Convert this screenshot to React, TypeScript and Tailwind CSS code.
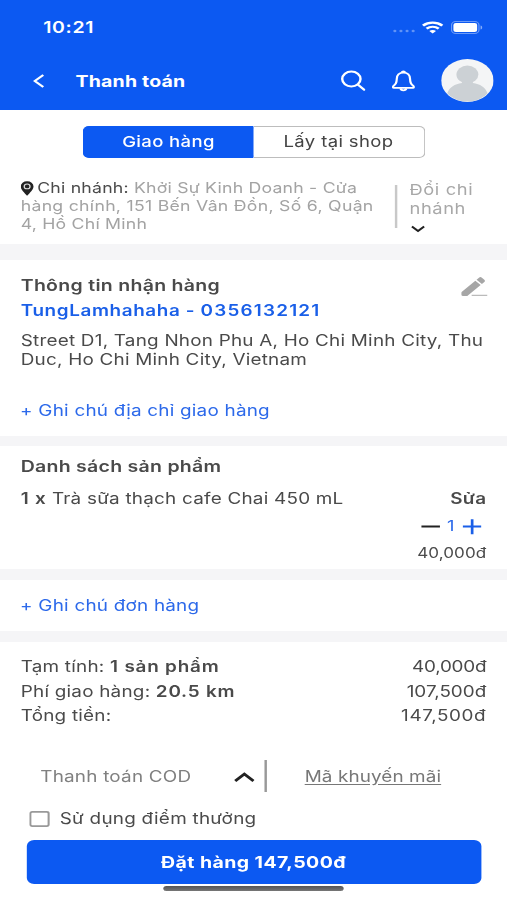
import React, { useState } from 'react'

interface SummaryRow {
  label: string
  detail?: string
  value: string
  valueClass: string
}

const summary: SummaryRow[] = [
  { label: 'Tạm tính:', detail: '1 sản phẩm', value: '40,000đ', valueClass: 'tracking-[-0.2px]' },
  { label: 'Phí giao hàng:', detail: '20.5 km', value: '107,500đ', valueClass: 'tracking-[0px]' },
  { label: 'Tổng tiền:', value: '147,500đ', valueClass: 'tracking-[0.5px]' },
]

function StatusBar() {
  return (
    <div className="flex h-[54px] items-center pl-[35.5px] pr-[20px] text-white">
      <span className="text-[16px] font-semibold tracking-[0.5px]">10:21</span>
      <div className="ml-auto flex items-center">
        <svg className="mr-[5px] mt-[8px] h-[4px] w-[19px]" viewBox="0 0 19 4" fill="#fff" opacity="0.35">
          <circle cx="2" cy="2" r="1.3" />
          <circle cx="7" cy="2" r="1.3" />
          <circle cx="12" cy="2" r="1.3" />
          <circle cx="17" cy="2" r="1.3" />
        </svg>
        <svg className="mr-[6px] h-[13px] w-[18px]" viewBox="0 0 17 13" preserveAspectRatio="none" fill="none" stroke="#fff">
          <path d="M1 4.6C5.3.6 11.7.6 16 4.6" strokeWidth="2.3" />
          <path d="M3.8 7.6c2.7-2.5 6.7-2.5 9.4 0" strokeWidth="2.2" />
          <path d="M8.5 12.6 5.9 10c1.5-1.4 3.7-1.4 5.2 0z" fill="#fff" stroke="none" />
        </svg>
        <svg className="h-[13px] w-[26px]" viewBox="0 0 26 13">
          <rect x="0.5" y="0.5" width="22.5" height="12" rx="3.5" fill="none" stroke="#fff" strokeOpacity="0.4" />
          <rect x="2" y="2" width="19.5" height="9" rx="2" fill="#fff" />
          <path d="M24.3 4.5v4c.9-.3 1.4-1.1 1.4-2s-.5-1.7-1.4-2z" fill="#fff" fillOpacity="0.5" />
        </svg>
      </div>
    </div>
  )
}

function Header() {
  return (
    <header className="h-[110px] bg-[#0c59f2]">
      <StatusBar />
      <div className="flex h-[53px] items-center pl-[27px] pr-[11.5px] text-white">
        <svg className="h-[14px] w-[10px]" viewBox="0 0 10 14" fill="none" stroke="#fff" strokeWidth="2">
          <path d="M8.5 1 1.5 7l7 6" />
        </svg>
        <h1 className="ml-[25px] text-[16px] font-bold tracking-[0.15px]">Thanh toán</h1>
        <svg className="ml-auto h-[22px] w-[21px]" viewBox="0 0 21 22" fill="none" stroke="#fff" strokeWidth="2" strokeLinecap="round">
          <circle cx="9.3" cy="9" r="7.5" />
          <path d="m14.8 14.7 5 5" />
        </svg>
        <svg className="ml-[21px] h-[22px] w-[20px]" viewBox="0 0 20 22" fill="none" stroke="#fff" strokeWidth="1.8" strokeLinejoin="round">
          <path d="M10 2.6C6.4 2.6 4.7 5.4 4.6 8.5c-.2 5-1.1 5.800-2.800 7.500-.6.8-.4 1.900.4 1.900h15.600c.8 0 1-1.100.4-1.900-1.700-1.700-2.600-2.500-2.800-7.500C15.300 5.400 13.600 2.600 10 2.600z" />
          <path d="M8.7 2.3c.2-1.300 2.400-1.300 2.600 0" />
          <path d="M7.6 18.400c.4 2.500 4.400 2.500 4.800 0" />
        </svg>
        <svg className="ml-[21px] h-[43px] w-[43px]" viewBox="0 0 43 43">
          <defs>
            <clipPath id="avatar">
              <circle cx="21.5" cy="21.5" r="21" />
            </clipPath>
          </defs>
          <circle cx="21.5" cy="21.5" r="21.5" fill="#f4f5f6" />
          <g fill="#ccd1d5" clipPath="url(#avatar)">
            <circle cx="21.5" cy="15.5" r="9" />
            <path d="M17 21h9v3c6 1 10 4 12 10v10H5V34c2-6 6-9 12-10z" />
          </g>
        </svg>
      </div>
    </header>
  )
}

function DeliveryTabs({ active, onChange }: { active: string; onChange: (tab: string) => void }) {
  return (
    <div className="mx-auto flex h-[32px] w-[281px] text-[15.2px] tracking-[0.3px]">
      {['Giao hàng', 'Lấy tại shop'].map((tab) => (
        <button
          key={tab}
          onClick={() => onChange(tab)}
          className={`w-1/2 border pt-[1px] first:rounded-l-[5px] first:border-r-0 last:rounded-r-[5px] last:border-l-0 ${
            active === tab ? 'border-[#0c59f2] bg-[#0c59f2] font-medium text-white' : 'border-[#bdbdbd] text-[#444]'
          }`}
        >
          {tab}
        </button>
      ))}
    </div>
  )
}

function Divider({ className }: { className: string }) {
  return <div className={`bg-[#f5f5f7] ${className}`} />
}

export default function App() {
  const [tab, setTab] = useState('Giao hàng')
  const [quantity, setQuantity] = useState(1)
  const [usePoints, setUsePoints] = useState(false)

  return (
    <div className="h-[900px] w-[507px] overflow-hidden bg-white">
      <div className="h-[900px] w-[416px] origin-top-left scale-x-[1.21875] whitespace-nowrap font-['Inter','Liberation_Sans',sans-serif] text-[15px] tracking-[0.18px] text-[#4a4a4a]">
        <Header />

        <section className="h-[134px] pt-[16px]">
          <DeliveryTabs active={tab} onChange={setTab} />
          <div className="flex pl-[17px] pt-[21px]">
            <p className="w-[307px] text-[14.5px] leading-[18px] text-[#a3a3a3]">
              <svg className="mr-[3px] inline-block h-[15px] w-[10.5px] align-[-3px]" viewBox="0 0 11 15">
                <path d="M5.5 0A5.4 5.4 0 0 0 0 5.4C0 9 5.5 15 5.5 15S11 9 11 5.4A5.4 5.4 0 0 0 5.5 0z" fill="#222" />
                <circle cx="5.5" cy="5.3" r="2.5" fill="#222" stroke="#ddd" strokeWidth="1.1" />
              </svg>
              <span className="text-[#4a4a4a]">Chi nhánh:</span> Khởi Sự Kinh Doanh - Cửa
              <br />
              <span className="tracking-[0.23px]">hàng chính, 151 Bến Vân Đồn, Số 6, Quận</span>
              <br />
              4, Hồ Chí Minh
            </p>
            <div className="mt-[6px] h-[43px] w-[2px] bg-[#c8c8c8]" />
            <button className="ml-[10px] mt-[1px] flex flex-col items-start text-left text-[15px] leading-[19px] tracking-[0.5px] text-[#a8a8a8]">
              Đổi chi
              <br />
              nhánh
              <svg className="ml-[1px] mt-[7px] h-[8px] w-[12px]" viewBox="0 0 12 8" fill="none" stroke="#222" strokeWidth="1.7">
                <path d="m1 1.5 5 4.5 5-4.5" />
              </svg>
            </button>
          </div>
        </section>

        <Divider className="h-[16px]" />

        <section className="relative h-[176px] pl-[17px] pt-[13px]">
          <h2 className="text-[16px] font-semibold leading-[25px] tracking-[0.24px]">Thông tin nhận hàng</h2>
          <p className="text-[15.5px] font-semibold leading-[25px] tracking-[0.5px] text-[#1a5fe8]">
            TungLamhahaha - <span className="tracking-[0.98px]">0356132121</span>
          </p>
          <p className="mt-[8px] text-[15.5px] leading-[19px]">
            Street D1, Tang Nhon Phu A, Ho Chi Minh City, Thu
            <br />
            Duc, Ho Chi Minh City, Vietnam
          </p>
          <button className="-ml-[0.5px] mt-[30px] block text-[15.5px] leading-[24px] text-[#2c69ea]">+ Ghi chú địa chỉ giao hàng</button>
          <svg className="absolute right-[16px] top-[15px] h-[23px] w-[22px]" viewBox="0 0 22 23" fill="#a6a6a6">
            <path d="M1 16.700 12 5.700l4.400 4.400L5.400 21.100H2q-1.400 0-1.400-1.400v-2q0-.6.400-1z" />
            <path d="m13 4.700 2-2q1.200-1.200 2.400 0l2 2q1.200 1.200 0 2.400l-2 2z" />
            <path d="M9 19.800h13v1.300H9z" fill="#bbb" />
          </svg>
        </section>

        <Divider className="h-[10px]" />

        <section className="h-[123px] pl-[17px] pr-[17px] pt-[8px]">
          <h2 className="text-[16px] font-semibold leading-[25px] tracking-[0.22px]">Danh sách sản phẩm</h2>
          <div className="mt-[7px] flex justify-between text-[15.5px] leading-[25px] tracking-[0.18px]">
            <p>
              <b className="font-semibold tracking-[0.6px]">1 x</b> Trà sữa thạch cafe Chai 450 mL
            </p>
            <button className="font-semibold">Sửa</button>
          </div>
          <div className="mt-[3px] flex h-[25px] items-center justify-end pr-[4px] text-[#2c69ea]">
            <button onClick={() => setQuantity(Math.max(1, quantity - 1))}>
              <svg className="h-[16px] w-[16px]" viewBox="0 0 16 16" fill="none" stroke="#222" strokeWidth="2.2">
                <path d="M.8 7.500H16" />
              </svg>
            </button>
            <span className="w-[18px] text-center text-[15px]">{quantity}</span>
            <button onClick={() => setQuantity(quantity + 1)}>
              <svg className="h-[16px] w-[16px]" viewBox="0 0 16 16" fill="none" stroke="#1a5fe8" strokeWidth="2.2">
                <path d="M.8 7.500H16M8.400.2v15" />
              </svg>
            </button>
          </div>
          <p className="mt-[2px] text-right text-[14px] leading-[24px] tracking-[0.05px]">40,000đ</p>
        </section>

        <Divider className="h-[11px]" />

        <section className="flex h-[51px] items-center pl-[16.5px]">
          <button className="text-[15.5px] text-[#2c69ea]">+ Ghi chú đơn hàng</button>
        </section>

        <Divider className="h-[11px]" />

        <section className="h-[110px] px-[17px] pt-[13px]">
          {summary.map((row) => (
            <div key={row.label} className="flex justify-between text-[15.5px] leading-[24.7px]">
              <p>
                {row.label} {row.detail && <b className="font-semibold tracking-[0.65px]">{row.detail}</b>}
              </p>
              <span className={row.valueClass}>{row.value}</span>
            </div>
          ))}
        </section>

        <footer className="text-[15.5px]">
          <div className="flex h-[48px] items-center">
            <button className="flex w-[217px] items-center justify-between pl-[33px] pr-[8.5px] pt-[1px] text-[#808080]">
              Thanh toán COD
              <svg className="h-[10px] w-[17px]" viewBox="0 0 17 10" fill="none" stroke="#222" strokeWidth="2.5">
                <path d="m1 9 7.5-7L16 9" />
              </svg>
            </button>
            <div className="h-[32px] w-[1.5px] bg-[#999]" />
            <button className="ml-[31.5px] pt-[1px] tracking-[0.08px] text-[#777] underline underline-offset-2">Mã khuyến mãi</button>
          </div>
          <label className="flex h-[36px] items-center pl-[24px] pt-[1px] tracking-[0.2px]">
            <input type="checkbox" className="sr-only" checked={usePoints} onChange={(e) => setUsePoints(e.target.checked)} />
            <svg className="mr-[8px] h-[16px] w-[17px]" viewBox="0 0 17 16">
              <rect x="0.9" y="0.9" width="15" height="14.2" rx="1.5" fill={usePoints ? '#0c59f2' : '#fff'} stroke="#999" strokeWidth="1.7" />
            </svg>
            Sử dụng điểm thưởng
          </label>
          <button className="mx-auto mt-[4px] block h-[44px] w-[373px] rounded-[6px] bg-[#0c59f2] text-[16px] font-bold tracking-[0.35px] text-white">
            Đặt hàng 147,500đ
          </button>
          <div className="mx-auto mt-[2px] h-[5px] w-[148px] rounded-full bg-linear-to-b from-[#555] to-[#777]" />
        </footer>
      </div>
    </div>
  )
}
